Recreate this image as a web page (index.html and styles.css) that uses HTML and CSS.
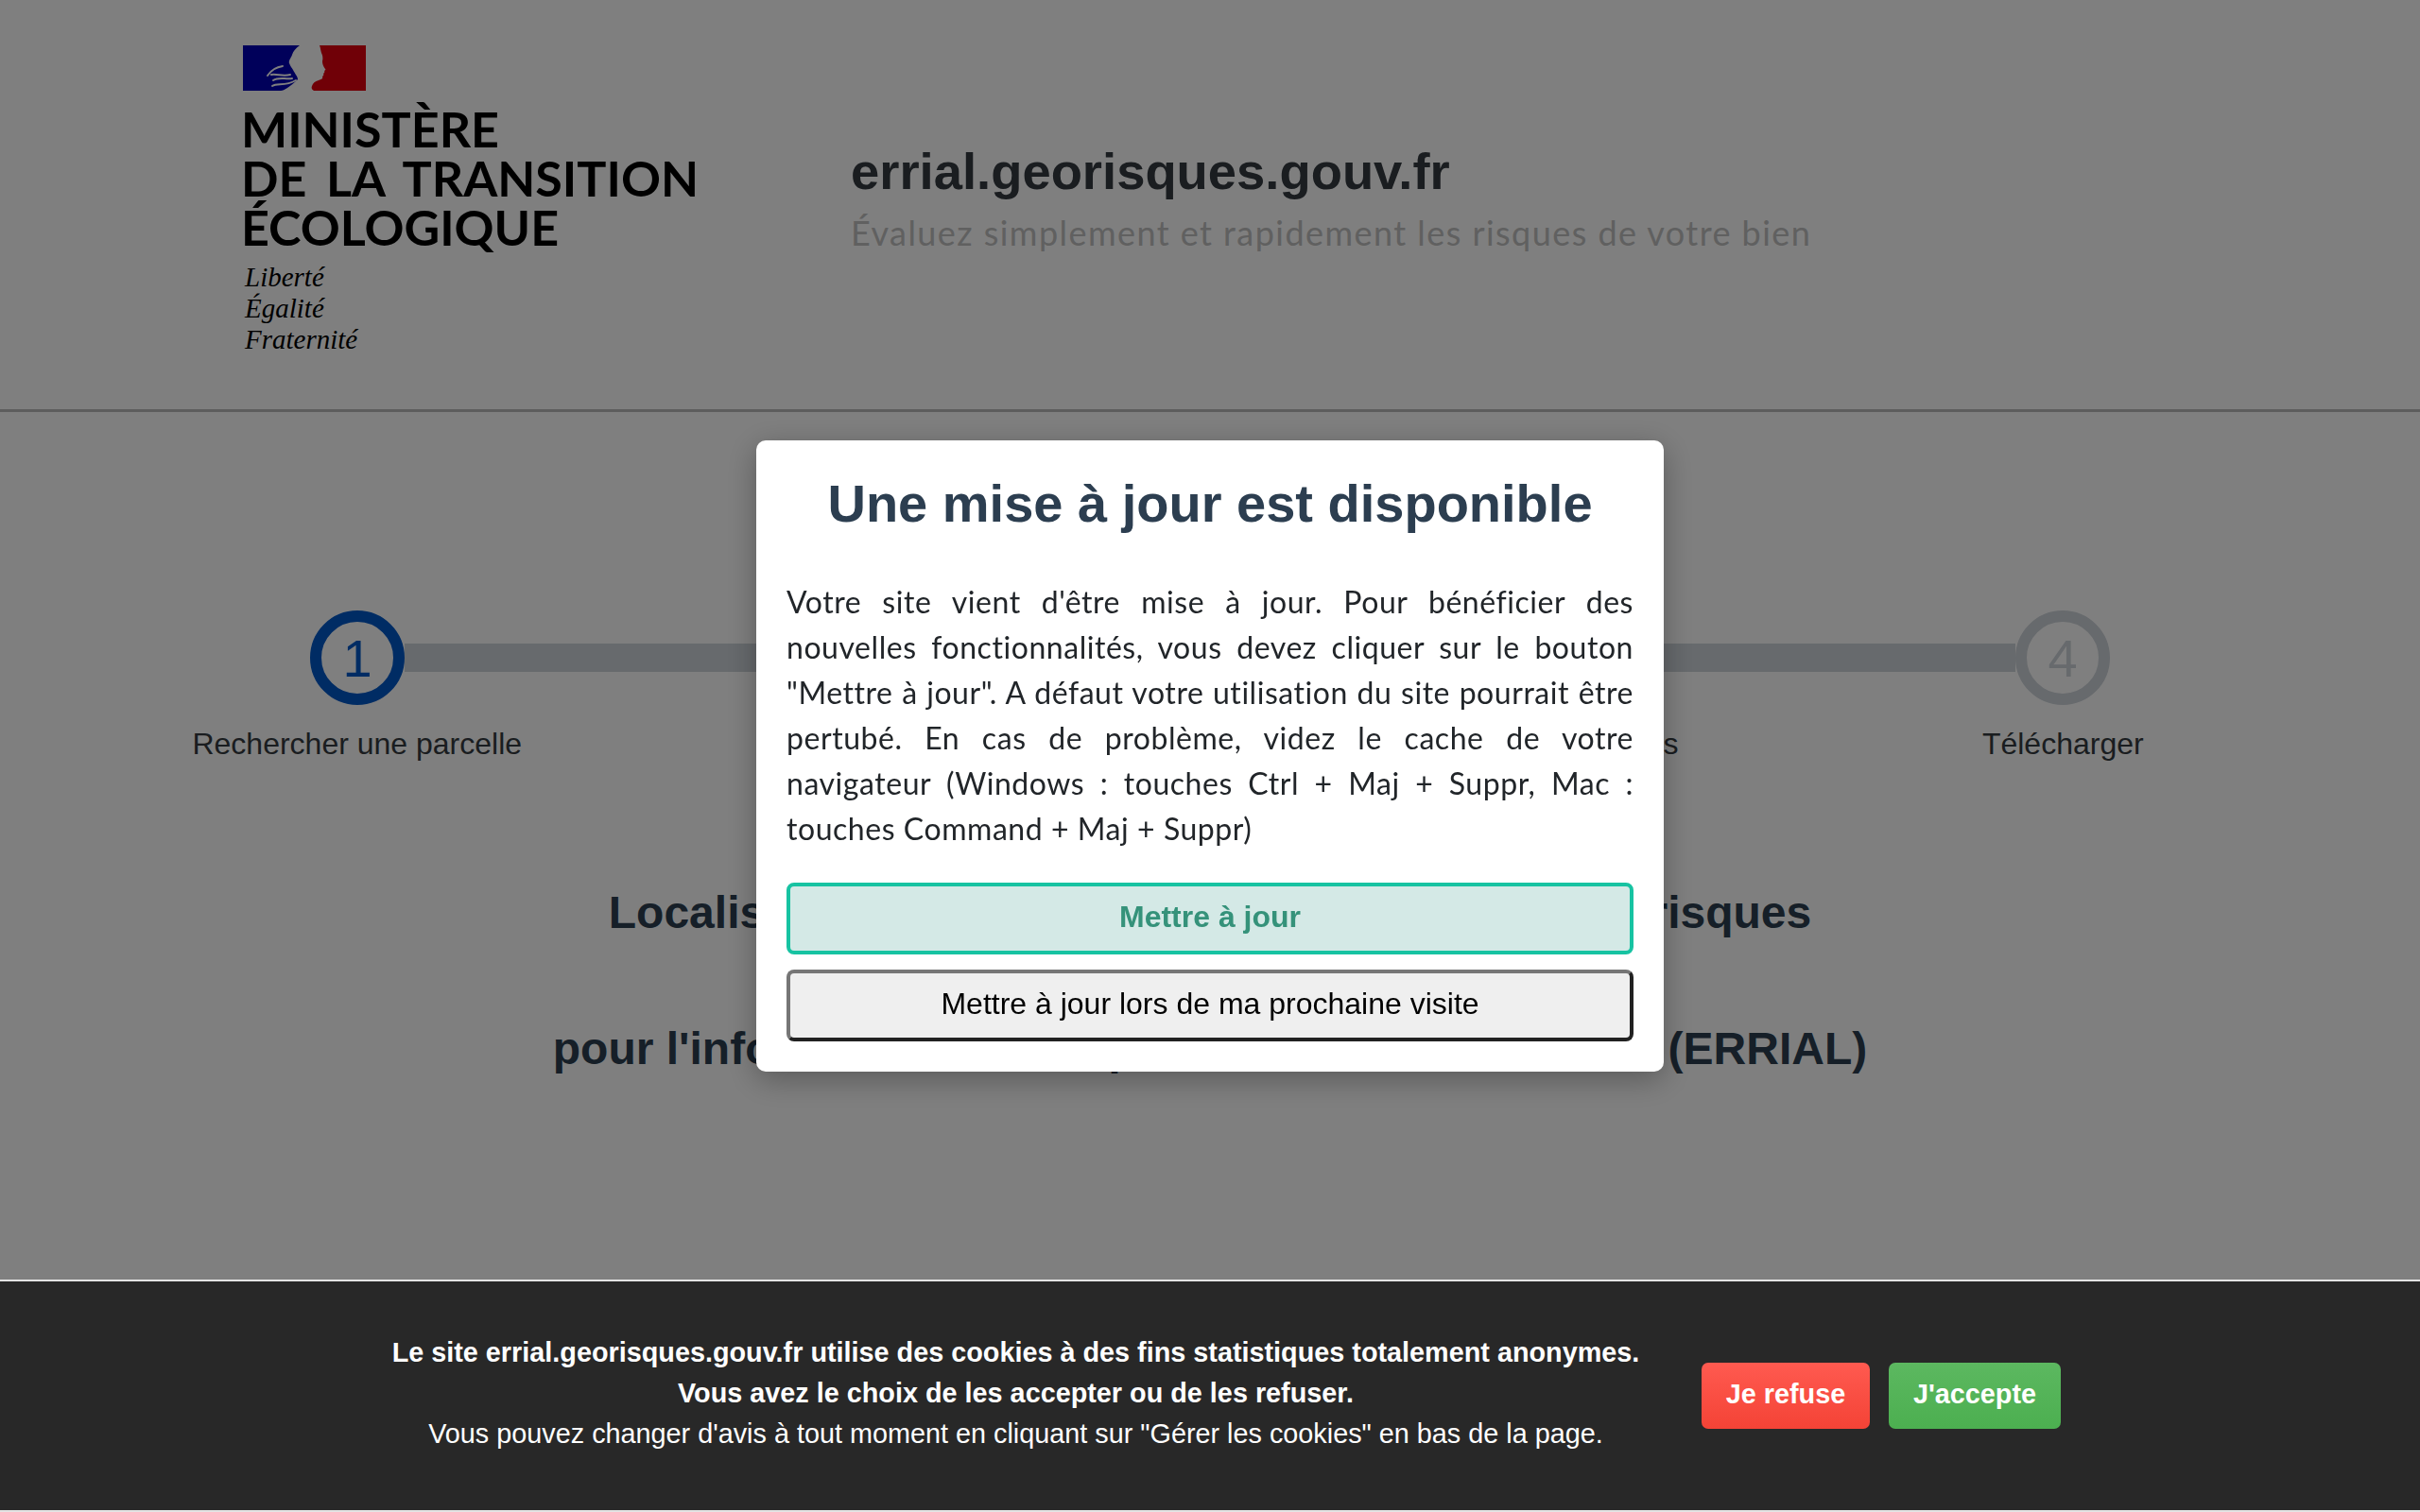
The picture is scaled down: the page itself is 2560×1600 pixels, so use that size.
FILE: index.html

```html
<!DOCTYPE html>
<html lang="fr">
<head>
  <meta charset="UTF-8" />
  <meta name="viewport" content="width=device-width, initial-scale=1" />
  <title>errial.georisques.gouv.fr</title>
  <link rel="stylesheet" href="styles.css">
</head>
<body>

  <header class="site-header">
    <div class="logo">
      <svg class="logo-flag" viewBox="0 0 130 48" width="130" height="48">
        <path class="flag-blue" d="M0 0H60C56 3 53 6 52 10C51 13 48 16 49 19C50 22 52 24 53 26C55 30 58 33 58 36C54 40 50 43 47 45C44 47 42 48 40 48H0Z" />
        <path class="flag-red" d="M81 0H130V48H75C73 47 72 45 73 43C74 40 76 38 80 37C83 36 85 35 84 33C85 32 86 31 85 30C86 29 87 28 86 27C87 26 88 26 87 25C85 22 84 20 84 17C85 13 84 10 83 8C82 5 82 2 81 0Z" />
        <g class="flag-hand">
          <path d="M26 32C30 26 35 23 42 22" />
          <path d="M30 31C36 30 42 33 50 31" />
          <path d="M32 37C38 33 44 36 52 35" />
          <path d="M31 43C36 39 44 44 56 37" />
        </g>
      </svg>
      <div class="logo-name">MINISTÈRE<br>DE LA TRANSITION<br>ÉCOLOGIQUE</div>
      <div class="logo-motto">Liberté<br>Égalité<br>Fraternité</div>
    </div>
    <div class="site-title">
      <h1>errial.georisques.gouv.fr</h1>
      <p>Évaluez simplement et rapidement les risques de votre bien</p>
    </div>
  </header>

  <section class="steps">
    <div class="steps-track">
      <div class="step-circle active">1</div>
      <div class="step-bar"></div>
      <div class="step-circle">2</div>
      <div class="step-bar"></div>
      <div class="step-circle">3</div>
      <div class="step-bar"></div>
      <div class="step-circle">4</div>
    </div>
    <div class="steps-labels">
      <div>Rechercher une parcelle</div>
      <div>Choisir une adresse</div>
      <div>Compléter vos informations</div>
      <div>Télécharger</div>
    </div>
  </section>

  <h2 class="intro">Localisez votre bien pour réaliser votre état des risques<br><br>pour l'information des acquéreurs et des locataires (ERRIAL)</h2>

  <div class="overlay">
    <div class="modal">
      <h3>Une mise à jour est disponible</h3>
      <p>Votre site vient d'être mise à jour. Pour bénéficier des nouvelles fonctionnalités, vous devez cliquer sur le bouton "Mettre à jour". A défaut votre utilisation du site pourrait être pertubé. En cas de problème, videz le cache de votre navigateur (Windows : touches Ctrl + Maj + Suppr, Mac : touches Command + Maj + Suppr)</p>
      <button class="btn-update">Mettre à jour</button>
      <button class="btn-later">Mettre à jour lors de ma prochaine visite</button>
    </div>
  </div>

  <div class="cookie-bar">
    <div class="cookie-text">
      <strong>Le site errial.georisques.gouv.fr utilise des cookies à des fins statistiques totalement anonymes.</strong><br>
      <strong>Vous avez le choix de les accepter ou de les refuser.</strong><br>
      Vous pouvez changer d'avis à tout moment en cliquant sur "Gérer les cookies" en bas de la page.
    </div>
    <button class="btn-refuse">Je refuse</button>
    <button class="btn-accept">J'accepte</button>
  </div>

</body>
</html>
```

FILE: styles.css

```css
body {
  margin: 0;
  height: 1600px;
  overflow: hidden;
  background: #fff;
  color: #343a40;
  font-family: "Liberation Sans", Arial, sans-serif;
}

/* header */
.site-header {
  display: flex;
  align-items: center;
  height: 433px;
  padding-left: 257px;
  border-bottom: 3px solid #bbb;
}
.logo {
  width: 643px;
  flex-shrink: 0;
  padding-bottom: 9px;
}
.logo-flag {
  display: block;
}
.flag-blue {
  fill: #0000b4;
}
.flag-red {
  fill: #e1000f;
}
.flag-hand path {
  fill: none;
  stroke: #fff;
  stroke-width: 2;
  stroke-linecap: round;
}
.logo-name {
  margin: 14px 0 0 -2px;
  font-family: Lato, sans-serif;
  font-weight: 700;
  font-size: 52px;
  line-height: 52px;
  word-spacing: 8px;
  color: #000;
}
.logo-motto {
  margin: 11px 0 0 2px;
  font-family: "Liberation Serif", serif;
  font-style: italic;
  font-size: 29px;
  line-height: 33px;
  color: #000;
}
.site-title {
  padding-bottom: 12px;
}
.site-title h1 {
  margin: 0;
  font-size: 54.4px;
  line-height: 65px;
  font-weight: 700;
}
.site-title p {
  margin: 5px 0 0;
  font-family: Lato, sans-serif;
  font-size: 36px;
  line-height: 54px;
  letter-spacing: 1.45px;
  color: #c0c0c0;
}

/* steps */
.steps {
  padding-top: 210px;
}
.steps-track {
  display: flex;
  align-items: center;
  width: 1904px;
  margin: 0 auto;
}
.step-circle {
  display: flex;
  align-items: center;
  justify-content: center;
  box-sizing: border-box;
  flex-shrink: 0;
  width: 100px;
  height: 100px;
  border: 12px solid #ced4da;
  border-radius: 50%;
  font-size: 56px;
  color: #ced4da;
}
.step-circle.active {
  border-color: #0058c8;
  color: #0058c8;
}
.step-bar {
  flex: 1;
  height: 30px;
  background: #ced4da;
}
.steps-labels {
  display: grid;
  grid-template-columns: repeat(4, 1fr);
  width: 2406px;
  margin: 22px auto 0;
  text-align: center;
  font-size: 32px;
  line-height: 38px;
}

.intro {
  margin: 124px 0 0;
  text-align: center;
  font-size: 48px;
  line-height: 72px;
  font-weight: 700;
  color: #2c3e50;
}

/* update modal */
.overlay {
  position: fixed;
  top: 0;
  left: 0;
  right: 0;
  bottom: 0;
  z-index: 10;
  display: flex;
  align-items: center;
  justify-content: center;
  background: rgba(0, 0, 0, 0.5);
}
.modal {
  box-sizing: border-box;
  width: 960px;
  padding: 32px;
  background: #fff;
  border-radius: 10px;
  box-shadow: 0 8px 32px rgba(0, 0, 0, 0.3);
}
.modal h3 {
  margin: 1px 0 0;
  text-align: center;
  font-size: 56px;
  line-height: 67px;
  font-weight: 700;
  color: #2c3e50;
}
.modal p {
  margin: 47px 0 0;
  text-align: justify;
  font-family: Lato, sans-serif;
  font-size: 32px;
  line-height: 48px;
  letter-spacing: 0.55px;
  color: #212529;
}
.modal button {
  display: block;
  box-sizing: border-box;
  width: 100%;
  height: 76px;
  padding-bottom: 5px;
  border-radius: 8px;
  font-family: "Liberation Sans", Arial, sans-serif;
  font-size: 32px;
  cursor: pointer;
}
.btn-update {
  margin-top: 33px;
  border: 4px solid #17c3a2;
  background: #d4e9e6;
  color: #35927a;
  font-weight: 700;
}
.btn-later {
  margin-top: 16px;
  border: 4px solid;
  border-color: #767676 #212121 #212121 #767676;
  background: #efefef;
  color: #000;
}

/* cookie banner */
.cookie-bar {
  position: fixed;
  left: 0;
  right: 0;
  bottom: 0;
  z-index: 20;
  display: flex;
  align-items: center;
  justify-content: center;
  box-sizing: border-box;
  height: 246px;
  border-top: 2px solid #e4e4e4;
  border-bottom: 2px solid #e4e4e4;
  background: #282828;
  color: #fff;
}
.cookie-text {
  box-sizing: border-box;
  width: 1400px;
  padding: 0 3px 5px 0;
  text-align: center;
  font-size: 28.8px;
  line-height: 43.2px;
}
.cookie-bar button {
  height: 70px;
  padding-bottom: 4px;
  border: none;
  border-radius: 7px;
  font-family: "Liberation Sans", Arial, sans-serif;
  font-size: 28.8px;
  font-weight: 700;
  color: #fff;
  cursor: pointer;
}
.btn-refuse {
  width: 178px;
  margin-left: 24px;
  background: linear-gradient(#ff5a50, #f44336);
}
.btn-accept {
  width: 182px;
  margin-left: 20px;
  margin-right: 4px;
  background: linear-gradient(#5cb860, #4caf50);
}
```
